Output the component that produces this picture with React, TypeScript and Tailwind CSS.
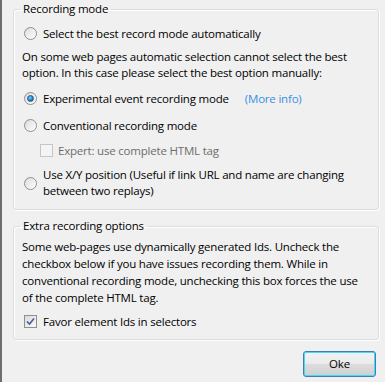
import React from "react";

const font = { fontFamily: '"Open Sans", "Noto Sans", sans-serif' };

const Radio = ({ checked }: { checked?: boolean }) => (
    <span className="relative flex h-[13px] w-[13px] flex-none items-center justify-center rounded-full border border-[#8e8f8f] bg-gradient-to-br from-[#d4d4d4] via-[#f2f2f2] to-[#ffffff]">
        <span className="h-[9px] w-[9px] rounded-full bg-gradient-to-br from-[#e0e0e0] to-[#fafafa]">
            {checked && (
                <span className="m-[1px] block h-[7px] w-[7px] rounded-full border border-[#1f5a87] bg-[radial-gradient(circle_at_40%_35%,#7fd3ff,#1a80c4_60%,#0d4f85)]" />
            )}
        </span>
    </span>
);

const Check = ({ checked, disabled }: { checked?: boolean; disabled?: boolean }) => (
    <span
        className={`flex h-[13px] w-[13px] flex-none items-center justify-center border ${
            disabled ? "border-[#c6c6c6] bg-[#f4f4f4]" : "border-[#8e8f8f] bg-gradient-to-br from-[#d9d9d9] to-[#fbfbfb]"
        }`}
    >
        {checked && (
            <svg width="9" height="9" viewBox="0 0 9 9">
                <path d="M1 4.5 L3.5 7 L8 1.5" fill="none" stroke="#4a5f97" strokeWidth="1.6" />
            </svg>
        )}
    </span>
);

const Group = ({ title, className, children }: { title: string; className?: string; children: React.ReactNode }) => (
    <fieldset
        className={`ml-[11px] mr-[6px] rounded-[3px] border border-[#d5dfe5] shadow-[inset_1px_1px_0_#ffffff,1px_1px_0_#ffffff] ${className ?? ""}`}
    >
        <legend className="ml-[6px] px-[3px] leading-[16px]">{title}</legend>
        <div className="whitespace-nowrap pl-[8px] pr-[2px]">{children}</div>
    </fieldset>
);

export default function App() {
    return (
        <div
            className="flex h-[382px] w-[385px] flex-col border-l-2 border-[#6e6e6e] bg-[#f0f0f0] pt-[1px] text-[11.5px] tracking-[-0.2px] text-[#000000]"
            style={font}
        >
            <Group title="Recording mode" className="pb-[10px]">
                <label className="mt-[8px] flex h-[17px] items-center gap-[6px] pl-[2px]">
                    <Radio />
                    <span>Select the best record mode automatically</span>
                </label>
                <p className="mt-[7px] leading-[16px]">
                    On some web pages automatic selection cannot select the best
                    <br />
                    option. In this case please select the best option manually:
                </p>
                <label className="mt-[9px] flex h-[17px] items-center gap-[6px] pl-[2px]">
                    <Radio checked />
                    <span>Experimental event recording mode</span>
                    <span className="ml-[10px] text-[#3a8ee6]">(More info)</span>
                </label>
                <label className="mt-[10px] flex h-[17px] items-center gap-[6px] pl-[2px]">
                    <Radio />
                    <span>Conventional recording mode</span>
                </label>
                <label className="mt-[8px] flex h-[17px] items-center gap-[5px] pl-[18px]">
                    <Check disabled />
                    <span className="text-[#6d6d6d]">Expert: use complete HTML tag</span>
                </label>
                <label className="mt-[8px] flex items-center gap-[6px] pl-[2px]">
                    <Radio />
                    <span className="leading-[16px]">
                        Use X/Y position (Useful if link URL and name are changing
                        <br />
                        between two replays)
                    </span>
                </label>
            </Group>

            <Group title="Extra recording options" className="mt-[8px] pb-[9px]">
                <p className="mt-[4px] leading-[17px]">
                    Some web-pages use dynamically generated Ids. Uncheck the
                    <br />
                    checkbox below if you have issues recording them. While in
                    <br />
                    conventional recording mode, unchecking this box forces the use
                    <br />
                    of the complete HTML tag.
                </p>
                <label className="mt-[7px] flex h-[17px] items-center gap-[6px] pl-[2px]">
                    <Check checked />
                    <span>Favor element Ids in selectors</span>
                </label>
            </Group>

            <div className="mt-auto flex justify-end pb-[5px] pr-[9px]">
                <button className="h-[26px] w-[73px] rounded-[3px] border border-[#3c7fb1] bg-[linear-gradient(#f2f2f2,#ebebeb_50%,#dddddd_50%,#cfcfcf)] shadow-[inset_0_0_0_1px_#48d8fb]">
                    Oke
                </button>
            </div>
        </div>
    );
}
